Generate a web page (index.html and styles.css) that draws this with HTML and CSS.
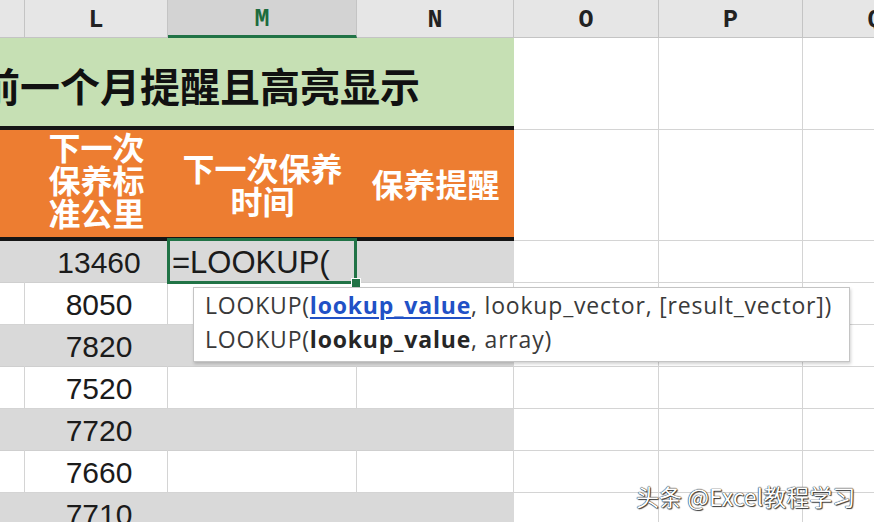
FILE: index.html
```html
<!DOCTYPE html>
<html lang="zh-CN">
<head>
  <meta charset="UTF-8">
  <title>保养提醒</title>
  <link rel="stylesheet" href="styles.css">
</head>
<body>
  <div class="sheet">
    <div class="grid">
      <!-- column letters -->
      <div class="col-head">K</div>
      <div class="col-head">L</div>
      <div class="col-head col-head-active">M</div>
      <div class="col-head">N</div>
      <div class="col-head">O</div>
      <div class="col-head">P</div>
      <div class="col-head">Q</div>

      <!-- title row -->
      <div class="title">前一个月提醒且高亮显示</div>
      <div class="cell"></div>
      <div class="cell"></div>
      <div class="cell"></div>

      <!-- header row -->
      <div class="head head-k"><span>本次公里</span></div>
      <div class="head head-top">下一次<br>保养标<br>准公里</div>
      <div class="head">下一次保养<br>时间</div>
      <div class="head">保养提醒</div>
      <div class="cell"></div>
      <div class="cell"></div>
      <div class="cell"></div>

      <!-- data rows -->
      <div class="cell gray"></div>
      <div class="cell gray num">13460</div>
      <div class="cell gray active">=LOOKUP(</div>
      <div class="cell gray"></div>
      <div class="cell"></div>
      <div class="cell"></div>
      <div class="cell"></div>

      <div class="cell"></div>
      <div class="cell num">8050</div>
      <div class="cell"></div>
      <div class="cell"></div>
      <div class="cell"></div>
      <div class="cell"></div>
      <div class="cell"></div>

      <div class="cell gray"></div>
      <div class="cell gray num">7820</div>
      <div class="cell gray"></div>
      <div class="cell gray"></div>
      <div class="cell"></div>
      <div class="cell"></div>
      <div class="cell"></div>

      <div class="cell"></div>
      <div class="cell num">7520</div>
      <div class="cell"></div>
      <div class="cell"></div>
      <div class="cell"></div>
      <div class="cell"></div>
      <div class="cell"></div>

      <div class="cell gray"></div>
      <div class="cell gray num">7720</div>
      <div class="cell gray"></div>
      <div class="cell gray"></div>
      <div class="cell"></div>
      <div class="cell"></div>
      <div class="cell"></div>

      <div class="cell"></div>
      <div class="cell num">7660</div>
      <div class="cell"></div>
      <div class="cell"></div>
      <div class="cell"></div>
      <div class="cell"></div>
      <div class="cell"></div>

      <div class="cell gray"></div>
      <div class="cell gray num">7710</div>
      <div class="cell gray"></div>
      <div class="cell gray"></div>
      <div class="cell"></div>
      <div class="cell"></div>
      <div class="cell"></div>
    </div>

    <div class="tip">
      <div>LOOKUP(<b class="current">lookup_value</b>, lookup_vector, [result_vector])</div>
      <div>LOOKUP(<b>lookup_value</b>, array)</div>
    </div>

    <div class="watermark">头条 @Excel教程学习</div>
  </div>
</body>
</html>
```

FILE: styles.css
```css
* {
  box-sizing: border-box;
}

body {
  margin: 0;
  background: #fff;
  font-family: "Liberation Sans", Arial, sans-serif;
}

.sheet {
  position: relative;
  width: 874px;
  height: 522px;
  overflow: hidden;
}

.grid {
  display: grid;
  grid-template-columns: 140px 143px 189px 157px 145px 144px 145px;
  grid-template-rows: 38px 92px 111px repeat(7, 42px);
  margin-left: -115px;
}

.col-head {
  display: flex;
  align-items: center;
  justify-content: center;
  padding-top: 4px;
  background: #e6e6e6;
  border-right: 1px solid #c4c4c4;
  border-bottom: 1px solid #c4c4c4;
  font-family: "Liberation Mono", monospace;
  font-weight: 700;
  font-size: 25px;
  color: #222;
}

.col-head-active {
  background: #d3d3d3;
  color: #1d6b3e;
  border-bottom: 3px solid #217346;
}

.title {
  grid-column: 1 / 5;
  display: flex;
  align-items: center;
  padding: 6px 0 0 95px;
  background: #c6e0b4;
  border-bottom: 4px solid #151515;
  font-family: "Noto Sans CJK SC", sans-serif;
  font-weight: 700;
  font-size: 40px;
  color: #111;
  white-space: nowrap;
  overflow: hidden;
}

.head {
  display: flex;
  align-items: center;
  justify-content: center;
  background: #ed7d31;
  border-bottom: 4px solid #151515;
  font-family: "Noto Sans CJK SC", sans-serif;
  font-weight: 700;
  font-size: 32px;
  line-height: 33px;
  color: #fff;
  text-align: center;
  overflow: hidden;
}

.head-top {
  align-items: flex-start;
}

.head-k {
  justify-content: flex-end;
  padding-right: 26px;
  white-space: nowrap;
}

.cell {
  border-right: 1px solid #d4d4d4;
  border-bottom: 1px solid #d4d4d4;
  background: #fff;
}

.cell.gray {
  background: #d9d9d9;
  border-right-color: #d9d9d9;
  border-bottom-color: #cfcfcf;
}

.num {
  display: flex;
  align-items: center;
  justify-content: center;
  padding: 3px 0 0 6px;
  font-size: 30px;
  color: #1b1b1b;
}

.active {
  position: relative;
  z-index: 1;
  display: flex;
  align-items: center;
  padding: 3px 0 0 4px;
  font-size: 31px;
  color: #1b1b1b;
}

.active::before {
  content: "";
  position: absolute;
  left: -1px;
  top: -3px;
  right: -1px;
  bottom: -2px;
  border: 3px solid #217346;
}

.active::after {
  content: "";
  position: absolute;
  right: -5px;
  bottom: -6px;
  width: 8px;
  height: 8px;
  background: #217346;
  border: 1px solid #fff;
}

.tip {
  position: absolute;
  left: 193px;
  top: 287px;
  width: 657px;
  height: 75px;
  padding: 0 11px;
  background: #fff;
  border: 1px solid #c4c4c4;
  box-shadow: 1px 2px 3px rgba(0, 0, 0, 0.18);
  z-index: 2;
  font-family: "Open Sans", sans-serif;
  font-size: 23px;
  line-height: 34px;
  letter-spacing: 0.8px;
  color: #3a3a3a;
  white-space: nowrap;
}

.tip b {
  color: #262626;
}

.tip .current {
  color: #2151c6;
  text-decoration: underline;
  text-decoration-thickness: 2px;
  text-underline-offset: 3px;
}

.watermark {
  position: absolute;
  left: 636px;
  top: 479px;
  z-index: 3;
  font-family: "Noto Sans CJK SC", sans-serif;
  font-size: 23px;
  color: #fff;
  text-shadow: 0 0 1px #111, 0 0 1px #111, 1px 1px 1px #444;
  white-space: nowrap;
}
```
